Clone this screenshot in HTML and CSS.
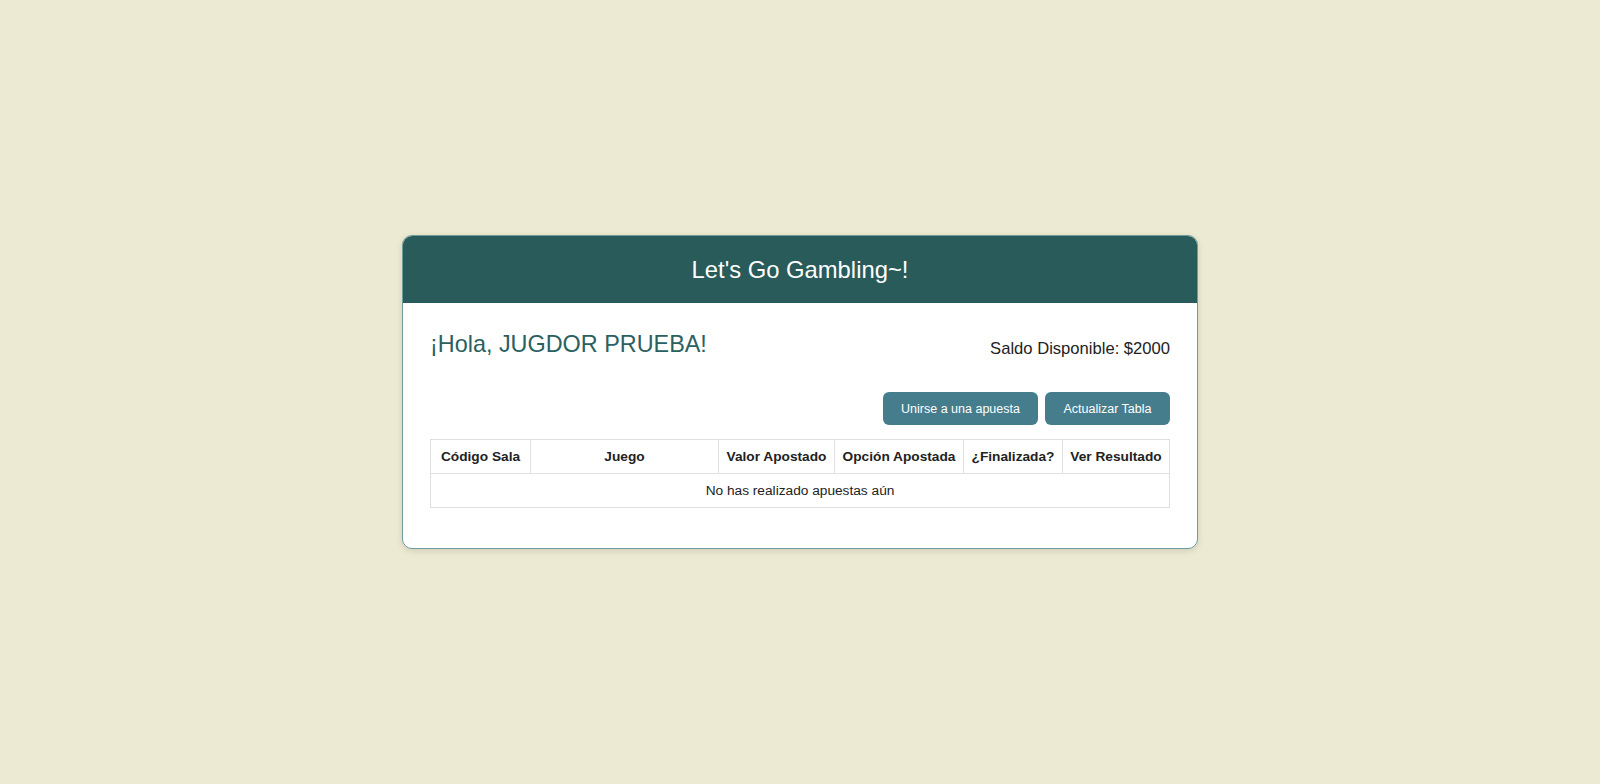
FILE: index.html
```html
<!DOCTYPE html>
<html lang="es">
<head>
<meta charset="utf-8">
<title>Let's Go Gambling~!</title>
<link rel="stylesheet" href="styles.css">
</head>
<body>
<main class="page">
  <section class="card">
    <header class="card-header">
      <h1 class="title">Let's Go Gambling~!</h1>
    </header>
    <div class="card-body">
      <div class="top-row">
        <h2 class="greeting">¡Hola, JUGDOR PRUEBA!</h2>
        <p class="balance">Saldo Disponible: $2000</p>
      </div>
      <div class="actions">
        <button class="btn btn-join" type="button">Unirse a una apuesta</button>
        <button class="btn btn-refresh" type="button">Actualizar Tabla</button>
      </div>
      <table class="bets">
        <thead>
          <tr>
            <th class="c-code">Código Sala</th>
            <th class="c-game">Juego</th>
            <th class="c-value">Valor Apostado</th>
            <th class="c-option">Opción Apostada</th>
            <th class="c-done">¿Finalizada?</th>
            <th class="c-result">Ver Resultado</th>
          </tr>
        </thead>
        <tbody>
          <tr>
            <td class="empty" colspan="6">No has realizado apuestas aún</td>
          </tr>
        </tbody>
      </table>
    </div>
  </section>
</main>
</body>
</html>
```

FILE: styles.css
```css
* { box-sizing: border-box; }

html, body {
  margin: 0;
  padding: 0;
  height: 100%;
}

body {
  background: #ecead2;
  font-family: "Liberation Sans", Arial, sans-serif;
  color: #222;
}

.page {
  min-height: 100%;
  display: flex;
  justify-content: center;
  align-items: flex-start;
  padding-top: 235px;
}

.card {
  width: 796px;
  background: #ffffff;
  border: 1px solid #6f9c9c;
  border-radius: 10px;
  overflow: hidden;
  box-shadow: 0 2px 6px rgba(0, 0, 0, 0.12);
}

.card-header {
  background: #285b5a;
  height: 67px;
  display: flex;
  align-items: center;
  justify-content: center;
}

.title {
  margin: 0;
  font-size: 23.8px;
  font-weight: normal;
  color: #ffffff;
}

.card-body {
  padding: 28px 27px 40px 27px;
}

.top-row {
  display: flex;
  justify-content: space-between;
  align-items: flex-start;
  height: 61px;
}

.greeting {
  margin: 0;
  font-size: 23.4px;
  font-weight: normal;
  color: #2b6060;
}

.balance {
  margin: 8px 0 0 0;
  font-size: 16.6px;
  color: #222;
}

.actions {
  display: flex;
  justify-content: flex-end;
  gap: 7px;
  margin-bottom: 14px;
}

.btn {
  font-family: "Liberation Sans", Arial, sans-serif;
  font-size: 12.5px;
  color: #ffffff;
  background: #467d8c;
  border: none;
  border-radius: 6px;
  height: 33px;
  padding: 0;
}

.btn-join { width: 155px; }
.btn-refresh { width: 125px; }

.bets {
  width: 100%;
  border-collapse: collapse;
  table-layout: fixed;
  font-size: 13.7px;
}

.bets th,
.bets td {
  border: 1px solid #e0e0e0;
  height: 34px;
  padding: 0 4px;
  text-align: center;
  color: #222;
  white-space: nowrap;
}

.bets th { font-weight: bold; }

.c-code { width: 100px; }
.c-game { width: 188px; }
.c-value { width: 116px; }
.c-option { width: 129px; }
.c-done { width: 99px; }
.c-result { width: 107px; }
```
